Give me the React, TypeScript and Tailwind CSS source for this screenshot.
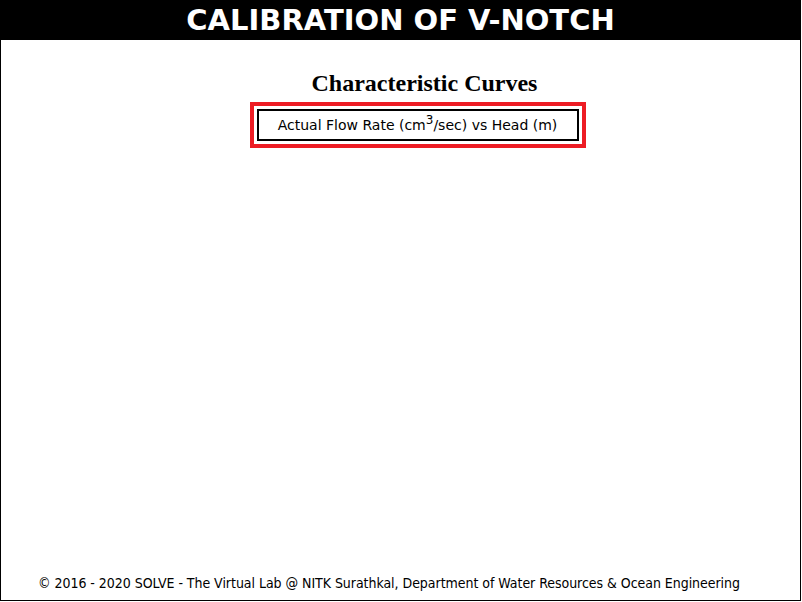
export default function App() {
  return (
    <div className="w-[801px] h-[601px] border border-black bg-white flex flex-col">
      <header className="h-[39px] bg-black flex items-center justify-center">
        <h1
          className="text-white font-bold text-[29px] leading-none"
          style={{ fontFamily: '"DejaVu Sans", Verdana, sans-serif' }}
        >
          CALIBRATION OF V-NOTCH
        </h1>
      </header>

      <main className="flex-1 flex flex-col items-center">
        <h2
          className="mt-[29px] ml-[48px] text-[24px] font-bold leading-[28px] text-black"
          style={{ fontFamily: '"Liberation Serif", "Times New Roman", serif' }}
        >
          Characteristic Curves
        </h2>
        <div className="mt-[5px] ml-[34px] border-4 border-[#ed1c24] p-[3px]">
          <button
            className="w-[322px] h-[32px] border-2 border-black bg-white text-[14px] text-black"
            style={{ fontFamily: '"DejaVu Sans", Verdana, sans-serif' }}
          >
            Actual Flow Rate (cm<sup className="text-[12px]">3</sup>/sec) vs Head (m)
          </button>
        </div>

        <footer
          className="mt-auto mb-[6px] self-start ml-[37px] text-[14px] tracking-[-0.04px] text-black"
          style={{ fontFamily: '"DejaVu Sans Condensed", "DejaVu Sans", Tahoma, sans-serif' }}
        >
          © 2016 - 2020 SOLVE - The Virtual Lab @ NITK Surathkal, Department of Water Resources &amp; Ocean Engineering
        </footer>
      </main>
    </div>
  );
}
